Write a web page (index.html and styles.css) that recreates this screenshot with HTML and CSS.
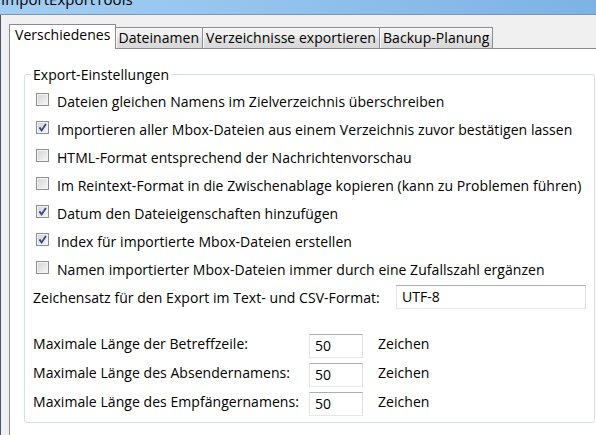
FILE: index.html
```html
<!DOCTYPE html>
<html lang="de">
<head>
<meta charset="utf-8">
<title>ImportExportTools</title>
<link rel="stylesheet" href="styles.css">
</head>
<body>
<div class="titlebar"><span class="title">ImportExportTools</span></div>
<div class="window">
  <div class="tabs">
    <div class="tab selected">Verschiedenes</div>
    <div class="tab">Dateinamen</div>
    <div class="tab">Verzeichnisse exportieren</div>
    <div class="tab">Backup-Planung</div>
  </div>
  <div class="panel">
    <fieldset class="group">
      <legend>Export-Einstellungen</legend>
      <div class="check"><span class="box"></span>Dateien gleichen Namens im Zielverzeichnis überschreiben</div>
      <div class="check"><span class="box"><svg viewBox="0 0 11 11" width="11" height="11"><path d="M2.4 5.4 L4.6 8.4 L8.9 2.1" fill="none" stroke="#33498c" stroke-width="1.8"/></svg></span>Importieren aller Mbox-Dateien aus einem Verzeichnis zuvor bestätigen lassen</div>
      <div class="check"><span class="box"></span>HTML-Format entsprechend der Nachrichtenvorschau</div>
      <div class="check"><span class="box"></span>Im Reintext-Format in die Zwischenablage kopieren (kann zu Problemen führen)</div>
      <div class="check"><span class="box"><svg viewBox="0 0 11 11" width="11" height="11"><path d="M2.4 5.4 L4.6 8.4 L8.9 2.1" fill="none" stroke="#33498c" stroke-width="1.8"/></svg></span>Datum den Dateieigenschaften hinzufügen</div>
      <div class="check"><span class="box"><svg viewBox="0 0 11 11" width="11" height="11"><path d="M2.4 5.4 L4.6 8.4 L8.9 2.1" fill="none" stroke="#33498c" stroke-width="1.8"/></svg></span>Index für importierte Mbox-Dateien erstellen</div>
      <div class="check"><span class="box"></span>Namen importierter Mbox-Dateien immer durch eine Zufallszahl ergänzen</div>
      <div class="charset">
        <span>Zeichensatz für den Export im Text- und CSV-Format:</span>
        <span class="field wide">UTF-8</span>
      </div>
      <div class="limits">
        <span class="label">Maximale Länge der Betreffzeile:</span><span class="field">50</span><span class="label unit">Zeichen</span>
        <span class="label">Maximale Länge des Absendernamens:</span><span class="field">50</span><span class="label unit">Zeichen</span>
        <span class="label">Maximale Länge des Empfängernamens:</span><span class="field">50</span><span class="label unit">Zeichen</span>
      </div>
    </fieldset>
  </div>
</div>
</body>
</html>
```
FILE: styles.css
```css
html, body {
  margin: 0;
  padding: 0;
}

body {
  width: 596px;
  height: 435px;
  overflow: hidden;
  background: #f0f0f0;
  font-family: "Open Sans", "Noto Sans", sans-serif;
  font-size: 14px;
  letter-spacing: 0.05px;
  color: #000;
}

/* window caption, only its lower edge is in view */
.titlebar {
  height: 14px;
  border-bottom: 1px solid #7f95b2;
  background: linear-gradient(90deg, #a4cef3 0%, #93c3ed 45%, #7db2e5 100%);
  overflow: hidden;
}

.title {
  display: block;
  margin-top: -10px;
  padding-left: 1px;
  font-size: 15px;
  line-height: 18px;
  white-space: nowrap;
}

.window {
  width: 610px;
  height: 430px;
  box-sizing: border-box;
  border-left: 1px solid #4a556a;
  padding: 9px 0 0 8px;
}

/* tab strip */
.tabs {
  display: flex;
  align-items: flex-end;
  height: 24px;
}

.tab {
  box-sizing: border-box;
  height: 21px;
  margin-left: -1px;
  padding: 0 3px;
  border: 1px solid #898c95;
  border-bottom: none;
  background: linear-gradient(#f4f4f4, #ececec 45%, #e0e0e0 55%, #d8d8d8);
  box-shadow: inset 1px 1px 0 #fbfbfb;
  line-height: 19px;
  white-space: nowrap;
}

.tab.selected {
  position: relative;
  z-index: 1;
  height: 25px;
  margin-left: 0;
  margin-bottom: -1px;
  padding: 0 4px 0 5px;
  background: #fff;
  box-shadow: none;
  line-height: 20px;
}

.panel {
  height: 400px;
  border: 1px solid #898c95;
  background: #fff;
}

/* group box */
.group {
  min-width: 0;
  margin: 17px 14px 0 14px;
  padding: 4px 8px 2px 8px;
  border: 1px solid #d5dfe5;
  border-radius: 3px;
}

.group legend {
  margin-left: -2px;
  padding: 0 2px;
  line-height: 17px;
}

.check {
  display: flex;
  align-items: center;
  height: 28px;
  padding-left: 3px;
  gap: 8px;
  white-space: nowrap;
}

.box {
  flex: none;
  display: flex;
  align-items: center;
  justify-content: center;
  width: 13px;
  height: 13px;
  margin-bottom: 3px;
  box-sizing: border-box;
  border: 1px solid #8e8f8f;
  background: linear-gradient(135deg, #d3d3d3, #f7f7f7);
  box-shadow: inset 0 0 0 1px #f3f3f3;
}

.field {
  box-sizing: border-box;
  height: 24px;
  padding: 0 5px;
  border: 1px solid;
  border-color: #abadb3 #dbdfe6 #e3e9ef #e2e3ea;
  background: #fff;
  line-height: 22px;
}

.charset {
  display: flex;
  align-items: center;
  justify-content: space-between;
  height: 28px;
  white-space: nowrap;
}

.field.wide {
  width: 190px;
}

.limits {
  display: grid;
  grid-template-columns: 276px 54px auto;
  grid-auto-rows: 29px;
  margin-top: 22px;
  align-items: start;
}

.limits .field {
  margin-top: 1px;
}

.label {
  padding-top: 2px;
  line-height: 17px;
  white-space: nowrap;
}

.unit {
  padding-left: 15px;
}
```
